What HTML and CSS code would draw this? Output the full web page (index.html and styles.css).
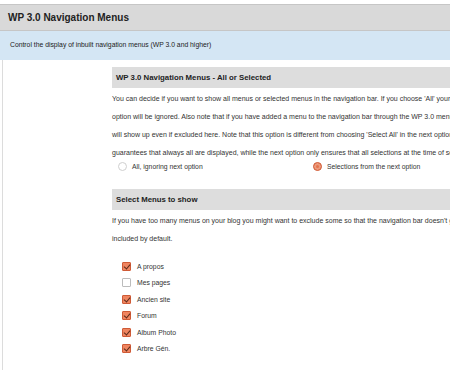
FILE: index.html
```html
<!DOCTYPE html>
<html lang="en">
<head>
    <meta charset="UTF-8">
    <title>WP 3.0 Navigation Menus</title>
    <link rel="stylesheet" href="styles.css">
</head>
<body>
    <div class="panel-title">WP 3.0 Navigation Menus</div>
    <div class="panel-desc">Control the display of inbuilt navigation menus (WP 3.0 and higher)</div>

    <div class="panel-body">
        <div class="section">
            <h3 class="section-title">WP 3.0 Navigation Menus - All or Selected</h3>
            <p class="section-text">
                You can decide if you want to show all menus or selected menus in the navigation bar. If you choose 'All' your<br>
                option will be ignored. Also note that if you have added a menu to the navigation bar through the WP 3.0 menu<br>
                will show up even if excluded here. Note that this option is different from choosing 'Select All' in the next option,<br>
                guarantees that always all are displayed, while the next option only ensures that all selections at the time of set
            </p>
            <div class="radios">
                <label class="radio"><span class="radio-dot"></span>All, ignoring next option</label>
                <label class="radio"><span class="radio-dot checked"></span>Selections from the next option</label>
            </div>
        </div>

        <div class="section">
            <h3 class="section-title">Select Menus to show</h3>
            <p class="section-text">
                If you have too many menus on your blog you might want to exclude some so that the navigation bar doesn't g<br>
                included by default.
            </p>
            <ul class="menu-list">
                <li><span class="check checked"></span>A propos</li>
                <li><span class="check"></span>Mes pages</li>
                <li><span class="check checked"></span>Ancien site</li>
                <li><span class="check checked"></span>Forum</li>
                <li><span class="check checked"></span>Album Photo</li>
                <li><span class="check checked"></span>Arbre Gén.</li>
            </ul>
        </div>
    </div>
</body>
</html>
```

FILE: styles.css
```css
* {
    margin: 0;
    padding: 0;
    box-sizing: border-box;
}

body {
    font-family: 'Liberation Sans', Arial, sans-serif;
    color: #333;
    background-color: #fff;
    width: 450px;
    height: 370px;
    overflow: hidden;
    padding-top: 4px;
}

.panel-title {
    background-color: #d9d9d9;
    border-top: 1px solid #c6c6c6;
    border-bottom: 1px solid #c6c6c6;
    height: 27px;
    padding: 0 8px;
    line-height: 25px;
    font-size: 10px;
    font-weight: bold;
    color: #222;
}

.panel-desc {
    background-color: #d4e6f4;
    height: 29px;
    line-height: 28px;
    padding: 0 10px;
    font-size: 6.8px;
    color: #222;
}

.panel-body {
    border-left: 1px solid #dcdcdc;
    margin-left: 2px;
    padding: 7px 0 20px 109px;
    width: 448px;
    height: 310px;
    overflow: hidden;
}

.section {
    margin-bottom: 17px;
}

.section-title {
    background-color: #dddddd;
    height: 21px;
    line-height: 21px;
    padding: 0 4px;
    font-size: 7.8px;
    font-weight: bold;
    color: #222;
}

.section-text {
    font-size: 7px;
    line-height: 18px;
    padding-top: 2px;
    white-space: nowrap;
}

.radios {
    display: grid;
    grid-template-columns: 195px 195px;
    margin-top: -2px;
    padding-left: 6px;
    font-size: 6.8px;
}

.radio {
    display: flex;
    align-items: center;
    gap: 5px;
    height: 12px;
}

.radio-dot {
    width: 9px;
    height: 9px;
    border-radius: 50%;
    border: 1px solid #cfcfcf;
    background-color: #fff;
}

.radio-dot.checked {
    border-color: #d2603c;
    background-color: #e4734c;
    box-shadow: inset 0 0 0 2px #ec9a7c;
}

.menu-list {
    list-style: none;
    padding: 10px 0 0 10px;
    font-size: 6.8px;
}

.menu-list li {
    display: flex;
    align-items: center;
    gap: 6px;
    height: 16.5px;
}

.check {
    position: relative;
    width: 9px;
    height: 9px;
    border: 1px solid #bcbcbc;
    border-radius: 1px;
    background-color: #fff;
}

.check.checked {
    border-color: #cf5a36;
    background-color: #ef8560;
}

.check.checked::after {
    content: '';
    position: absolute;
    left: 2px;
    top: 0;
    width: 3px;
    height: 5px;
    border-right: 1px solid #5a2a1a;
    border-bottom: 1px solid #5a2a1a;
    transform: rotate(40deg);
}
```
